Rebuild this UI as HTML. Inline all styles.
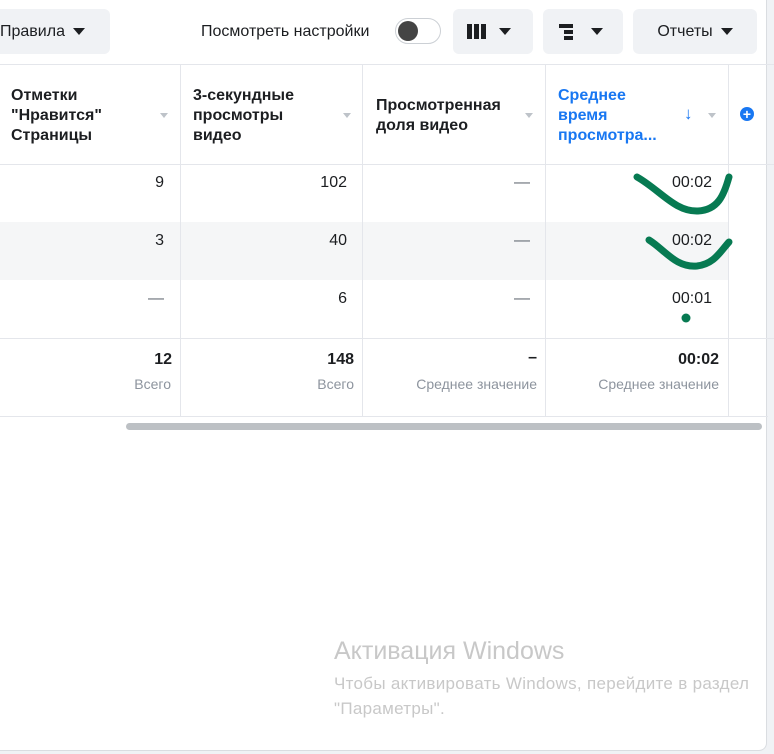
<!DOCTYPE html>
<html><head><meta charset="utf-8"><style>
body{margin:0;width:774px;height:754px;background:#f0f2f5;font-family:"Liberation Sans",Arial,sans-serif;position:relative;overflow:hidden;color:#1c1e21}
.card{position:absolute;left:-10px;top:-10px;width:777px;height:761px;background:#fff;border-radius:8px;border:1px solid #dadde1;box-sizing:border-box}
.a{position:absolute}
.btn{position:absolute;top:9px;height:45px;background:#f0f2f5;border-radius:6px;font-size:16px;line-height:45px;color:#1c1e21}
.tri{display:inline-block;width:0;height:0;border-left:6px solid transparent;border-right:6px solid transparent;border-top:7px solid #1c1e21;vertical-align:middle;margin-left:8px}
.vl{position:absolute;top:65px;height:351px;width:1px;background:#e4e6eb}
.hl{position:absolute;left:0;width:774px;height:1px;background:#e4e6eb}
.h{position:absolute;top:86px;font-size:16px;font-weight:bold;line-height:20px}
.st{position:absolute;width:0;height:0;border-left:4px solid transparent;border-right:4px solid transparent;border-top:5px solid #bec3c9}
.n{position:absolute;font-size:16px;text-align:right;width:160px}
.s{position:absolute;font-size:14px;color:#8d949e;text-align:right;width:170px}
</style></head><body>
<div class="card"></div>
<div class="btn" style="left:-10px;width:110px;padding-left:10px">Правила<span class="tri"></span></div>
<div class="a" style="left:201px;top:23px;font-size:16px">Посмотреть настройки</div>
<div class="a" style="left:395px;top:18px;width:46px;height:26px;border:1px solid #ccd0d5;border-radius:14px;box-sizing:border-box;background:#fff"><div class="a" style="left:2px;top:2px;width:20px;height:20px;border-radius:50%;background:#444"></div></div>
<div class="btn" style="left:453px;width:80px"><span class="a" style="left:14px;top:15px;width:5px;height:15px;background:#1c1e21"></span><span class="a" style="left:21px;top:15px;width:5px;height:15px;background:#1c1e21"></span><span class="a" style="left:28px;top:15px;width:5px;height:15px;background:#1c1e21"></span><span class="tri a" style="left:46px;top:19px;margin:0"></span></div>
<div class="btn" style="left:543px;width:80px"><span class="a" style="left:16px;top:15px;width:14px;height:4px;background:#1c1e21"></span><span class="a" style="left:21px;top:21px;width:9px;height:4px;background:#1c1e21"></span><span class="a" style="left:21px;top:27px;width:9px;height:4px;background:#1c1e21"></span><span class="tri a" style="left:48px;top:19px;margin:0"></span></div>
<div class="btn" style="left:633px;width:124px;text-align:center">Отчеты<span class="tri"></span></div>
<div class="hl" style="top:64px"></div>
<div class="hl" style="top:164px"></div>
<div class="a" style="left:0;top:222px;width:728px;height:58px;background:#f5f6f7"></div>
<div class="hl" style="top:338px"></div>
<div class="hl" style="top:416px;width:768px"></div>
<div class="vl" style="left:180px"></div><div class="vl" style="left:362px"></div><div class="vl" style="left:545px"></div><div class="vl" style="left:728px"></div>
<div class="h" style="left:11px">Отметки<br>"Нравится"<br>Страницы</div>
<div class="h" style="left:193px">3-секундные<br>просмотры<br>видео</div>
<div class="h" style="left:376px;top:96px">Просмотренная<br>доля видео</div>
<div class="h" style="left:558px;color:#1877f2">Среднее<br>время<br>просмотра...</div>
<div class="st" style="left:160px;top:113px"></div><div class="st" style="left:343px;top:113px"></div><div class="st" style="left:525px;top:113px"></div><div class="st" style="left:708px;top:113px"></div>
<div class="a" style="left:684px;top:104px;color:#1877f2;font-size:17px">↓</div>
<div class="a" style="left:740px;top:107px;width:14px;height:14px;border-radius:50%;background:#1877f2;color:#fff;font-size:14px;line-height:14px;text-align:center;font-weight:bold">+</div>
<div class="n" style="left:4px;top:174px">9</div><div class="n" style="left:187px;top:174px">102</div><div class="n" style="left:370px;top:174px;color:#606770">—</div><div class="n" style="left:552px;top:174px">00:02</div>
<div class="n" style="left:4px;top:232px">3</div><div class="n" style="left:187px;top:232px">40</div><div class="n" style="left:370px;top:232px;color:#606770">—</div><div class="n" style="left:552px;top:232px">00:02</div>
<div class="n" style="left:4px;top:290px;color:#606770">—</div><div class="n" style="left:187px;top:290px">6</div><div class="n" style="left:370px;top:290px;color:#606770">—</div><div class="n" style="left:552px;top:290px">00:01</div>
<div class="n" style="left:12px;top:351px;font-weight:bold">12</div><div class="n" style="left:194px;top:351px;font-weight:bold">148</div><div class="n" style="left:377px;top:349px;font-weight:bold">–</div><div class="n" style="left:559px;top:351px;font-weight:bold">00:02</div>
<div class="s" style="left:1px;top:376px">Всего</div><div class="s" style="left:184px;top:376px">Всего</div><div class="s" style="left:367px;top:376px">Среднее значение</div><div class="s" style="left:549px;top:376px">Среднее значение</div>
<div class="a" style="left:126px;top:423px;width:636px;height:7px;border-radius:4px;background:#bcc0c4"></div>
<svg class="a" style="left:0;top:0" width="774" height="754"><g fill="none" stroke="#077a52" stroke-width="7" stroke-linecap="round"><path d="M637 177 C660 190 675 212 698 211 C718 210 724 195 729 177"/><path d="M649 240 C665 250 676 268 697 266 C714 264 720 252 729 242"/></g><circle cx="686" cy="318" r="4.5" fill="#077a52"/></svg>
<div class="a" style="left:334px;top:637px;font-size:25px;color:#c8c8c8">Активация Windows</div>
<div class="a" style="left:334px;top:671px;font-size:17px;letter-spacing:0.3px;color:#c8c8c8;line-height:25px">Чтобы активировать Windows, перейдите в раздел<br>"Параметры".</div>
</body></html>
